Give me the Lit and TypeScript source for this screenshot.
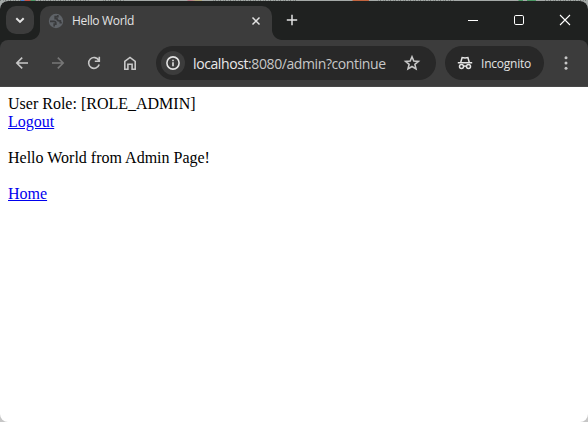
import { LitElement, html, css } from "lit";
import { customElement } from "lit/decorators.js";

@customElement("tab-strip")
class TabStrip extends LitElement {
  static styles = css`
    :host { display: flex; height: 39px; box-sizing: border-box; padding: 5px 0 0 6px; background: #1f2120; color: #e3e3e3; }
    svg { display: block; flex: none; fill: none; stroke: currentColor; }
    .search { width: 28px; height: 28px; border-radius: 10px; background: #3c3c3c; }
    .tab { position: relative; display: flex; align-items: center; box-sizing: border-box; width: 232px; height: 34px; margin-left: 6px; padding: 0 10px 5px 8px; background: #3c3c3c; border-radius: 10px 10px 0 0; }
    .tab::before, .tab::after { content: ""; position: absolute; bottom: 0; width: 10px; height: 10px; }
    .tab::before { left: -10px; background: radial-gradient(circle at 0 0, transparent 9.5px, #3c3c3c 10.3px); }
    .tab::after { right: -10px; background: radial-gradient(circle at 100% 0, transparent 9.5px, #3c3c3c 10.3px); }
    .title { flex: 1; margin-left: 8px; padding-top: 1px; font: 12px/16px "Open Sans", "Noto Sans", sans-serif; letter-spacing: -0.32px; white-space: nowrap; }
    .plus { margin: 8px 0 0 14px; }
    .controls { display: flex; margin-left: auto; color: #fff; }
    .controls svg { width: 46px; height: 28px; }
  `;
  render() {
    return html`
      <svg class="search" viewBox="0 0 28 28" stroke-width="2"><path d="M10.3 12.2 14 15.9l3.7-3.7" /></svg>
      <div class="tab">
        <svg width="16" height="16" viewBox="0 0 16 16">
          <circle cx="8" cy="8" r="7.2" fill="#5f6368" stroke="none" />
          <path d="M2 8.3h3.8q2 0 2 1.7v1.2H6.2v2.4M9.8 2v1.6H7.2v2.1h1.7q.3 2.2 2.2 2.2h1.2v1.7h1.5" stroke="#3a3b3d" stroke-width="1.7" />
        </svg>
        <span class="title">Hello World</span>
        <svg width="12" height="12" viewBox="0 0 12 12" stroke-width="1.5"><path d="m2.5 2.5 7 7m0-7-7 7" /></svg>
      </div>
      <svg class="plus" width="12" height="12" viewBox="0 0 12 12" stroke-width="1.5"><path d="M6 .8v10.4M.8 6h10.4" /></svg>
      <div class="controls">
        <svg viewBox="0 0 46 28"><path d="M18 14.5h10" /></svg>
        <svg viewBox="0 0 46 28"><rect x="18.5" y="9.5" width="9" height="9" rx="1.3" /></svg>
        <svg viewBox="0 0 46 28" stroke-width="1.1"><path d="m18 9 10 10m0-10L18 19" /></svg>
      </div>
    `;
  }
}

@customElement("tool-bar")
class ToolBar extends LitElement {
  static styles = css`
    :host { display: block; background: #1f2120; }
    .bar { display: flex; align-items: center; height: 47px; box-sizing: border-box; padding: 0 12px; background: #3c3c3c; border-bottom: 1px solid #474747; border-radius: 8px 8px 0 0; color: #c7c7c7; }
    svg { display: block; flex: none; fill: none; stroke: currentColor; }
    .nav { display: flex; gap: 16px; }
    .off { color: #777; }
    .address { display: flex; align-items: center; box-sizing: border-box; width: 280px; height: 34px; margin-left: 16px; padding: 0 14px 0 5px; border-radius: 17px; background: #282828; }
    .info { display: flex; align-items: center; justify-content: center; width: 24px; height: 24px; border-radius: 50%; background: #3c3c3c; color: #e3e3e3; }
    .url { flex: 1; margin-left: 8px; padding-top: 2px; font: 14px/20px "Open Sans", "Noto Sans", sans-serif; letter-spacing: -0.4px; white-space: nowrap; color: #c7c7c7; }
    .host { color: #e8e8e8; }
    .chip { display: flex; align-items: center; box-sizing: border-box; width: 99px; height: 34px; margin-left: 9px; padding-left: 12px; gap: 8px; border-radius: 17px; background: #282828; color: #e3e3e3; font: 12px/16px "Open Sans", "Noto Sans", sans-serif; letter-spacing: -0.22px; }
    .chip span { padding-top: 1px; }
    .menu { margin-left: auto; }
  `;
  render() {
    return html`
      <div class="bar">
        <div class="nav">
          <svg width="20" height="20" viewBox="0 0 20 20" stroke-width="1.6"><path d="M16 10H5m5.2-5.4L4.8 10l5.4 5.4" /></svg>
          <svg class="off" width="20" height="20" viewBox="0 0 20 20" stroke-width="1.6"><path d="M4 10h11M9.8 4.6l5.4 5.4-5.4 5.4" /></svg>
          <svg width="20" height="20" viewBox="0 0 20 20" stroke-width="1.6"><path d="M14.8 7.4A5.4 5.4 0 1 0 15.2 11.6M15.3 3.8v4.5h-4.5" /></svg>
          <svg width="20" height="20" viewBox="0 0 20 20" stroke-width="1.6"><path d="M4.8 8.4 10 4.4l5.2 4v7.8h-3.1v-4.9H7.9v4.9H4.8z" /></svg>
        </div>
        <div class="address">
          <div class="info">
            <svg width="16" height="16" viewBox="0 0 16 16" stroke-width="1.6"><circle cx="8" cy="8" r="6.1" /><path d="M8 7.2v4M8 4.7v1.5" /></svg>
          </div>
          <div class="url"><span class="host">localhost</span>:8080/admin?continue</div>
          <svg width="20" height="20" viewBox="0 0 20 20" stroke-width="1.6"><path d="m10 3.8 1.8 4.2 4.6.4-3.5 3 1.1 4.5-4-2.4L6 15.900l1.100-4.500-3.500-3 4.600-.4z" /></svg>
        </div>
        <div class="chip">
          <svg width="16" height="16" viewBox="0 0 16 16" stroke-width="1.5">
            <path d="M.8 7.800h14.400M3.700 7.500l1.400-4.900 2.900.5 2.900-.5 1.400 4.900" />
            <circle cx="4.500" cy="11.600" r="2" /><circle cx="11.500" cy="11.600" r="2" /><path d="M6.400 11.300q1.600-.7 3.200 0" />
          </svg>
          <span>Incognito</span>
        </div>
        <svg class="menu" width="20" height="20" viewBox="0 0 20 20"><g fill="currentColor" stroke="none"><circle cx="10" cy="4.8" r="1.5" /><circle cx="10" cy="10" r="1.5" /><circle cx="10" cy="15.2" r="1.5" /></g></svg>
      </div>
    `;
  }
}

@customElement("app-root")
class AppRoot extends LitElement {
  static styles = css`
    :host { display: block; box-sizing: border-box; height: 422px; background: linear-gradient(#a5aaa8 50%, #c6c6c6 50%); }
    .behind { height: 1px; background:
      linear-gradient(90deg, transparent 21px, #4a7fd0 21px 24px, #c75347 25px 30px, #4b9a65 31px 35px, transparent 35px 187px, #b77c88 188px 191px, #b0a77d 196px 202px, transparent 202px 352px, #c2643e 353px 369px, transparent 369px 518px, #4b9a65 519px 523px, transparent 523px 527px, #4b9a65 527px 536px, transparent 536px),
      linear-gradient(90deg, transparent 45px, #a5aaa800 45px 90px, #a5aaa8 90px 103px, #a5aaa800 103px 124px, #a5aaa8 124px 212px, #a5aaa800 212px 298px, #a5aaa8 298px 378px, #a5aaa800 378px 455px, #a5aaa8 455px 544px, transparent 544px),
      repeating-linear-gradient(90deg, #737976 0 1px, #a5aaa8 1px 3px, #858b88 3px 4px, #a5aaa8 4px 5px); }
    .window { height: 421px; overflow: hidden; border-radius: 8px; background: #fff; }
    .page { padding: 8px; color: #000; font: 16px/18px "Liberation Serif", "Times New Roman", serif; }
    .page p { margin: 18px 0; }
    a { color: #0000ee; text-decoration: underline; }
  `;
  render() {
    return html`
      <div class="behind"></div>
      <div class="window">
        <tab-strip></tab-strip>
        <tool-bar></tool-bar>
        <div class="page">
          <div>User Role: [ROLE_ADMIN]</div>
          <a href="#">Logout</a>
          <p>Hello World from Admin Page!</p>
          <a href="#">Home</a>
        </div>
      </div>
    `;
  }
}
